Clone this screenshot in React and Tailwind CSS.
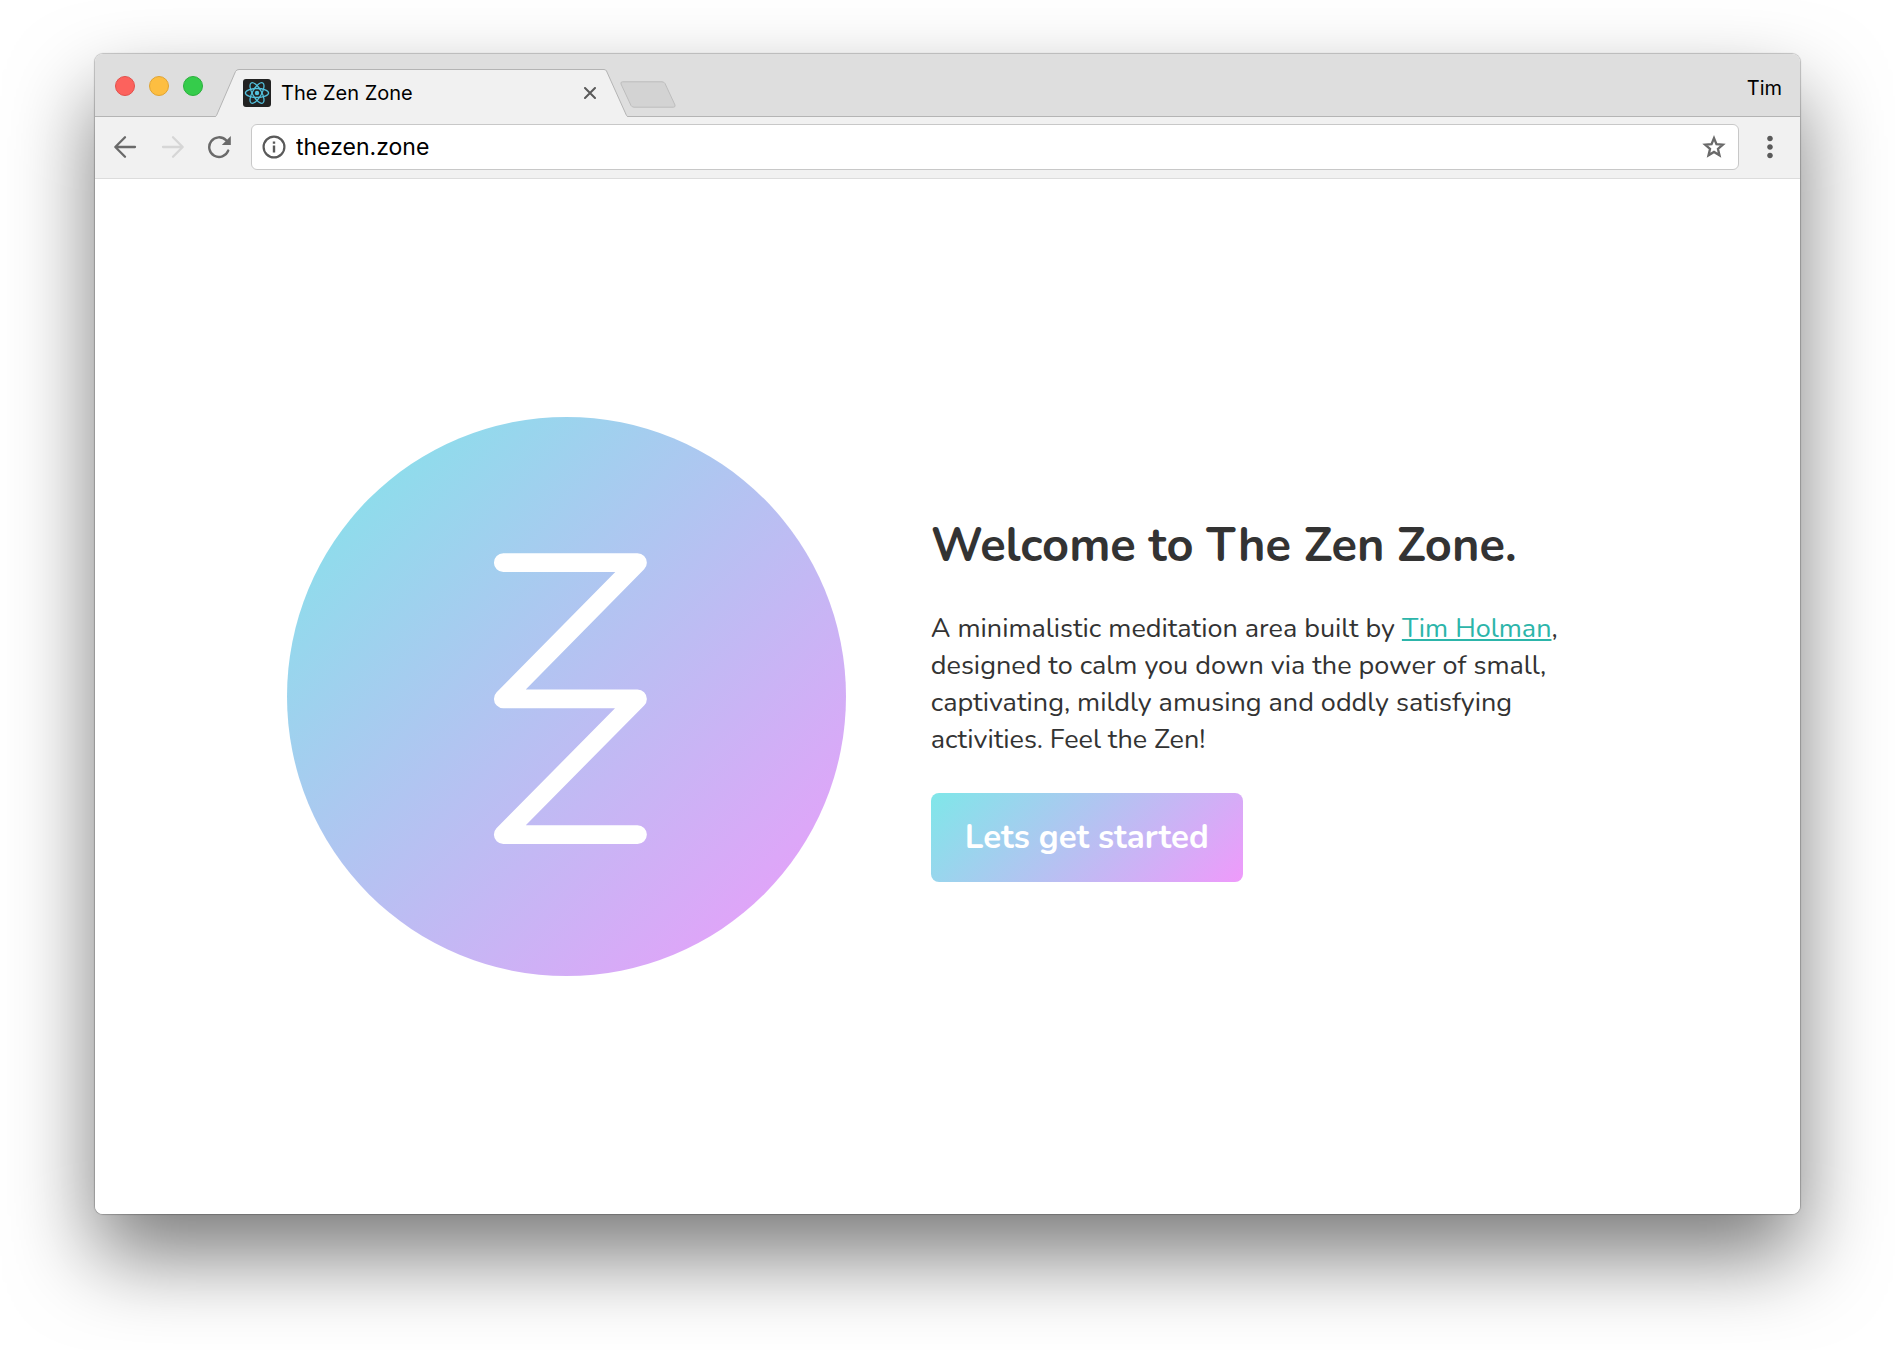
import React from 'react';
import { MdMoreVert } from 'react-icons/md';

const trafficLights = [
  { label: 'Close', className: 'bg-[#fc625d] border-[#e2504b]' },
  { label: 'Minimize', className: 'bg-[#fdbe41] border-[#e0a433]' },
  { label: 'Zoom', className: 'bg-[#35cc4b] border-[#2bb03d]' }
];

const ReactLogo = () => (
  <svg className="h-7 w-7 shrink-0" viewBox="0 0 28 28" fill="none" aria-hidden="true">
    <rect width="28" height="28" rx="3" fill="#222" />
    <g stroke="#53c1de" strokeWidth="1.3">
      <ellipse cx="14" cy="14" rx="11.6" ry="4.5" />
      <ellipse cx="14" cy="14" rx="11.6" ry="4.5" transform="rotate(60 14 14)" />
      <ellipse cx="14" cy="14" rx="11.6" ry="4.5" transform="rotate(120 14 14)" />
    </g>
    <circle cx="14" cy="14" r="2.2" fill="#53c1de" />
  </svg>
);

const ArrowIcon = ({ className }) => (
  <svg className={className} width="24" height="24" viewBox="0 0 24 24" fill="none" stroke="currentColor" strokeWidth="2.3" strokeLinecap="round" strokeLinejoin="round" aria-hidden="true">
    <path d="M22 12H2.5M12 2.3L2.3 12l9.7 9.7" />
  </svg>
);

const ReloadIcon = () => (
  <svg width="24" height="24" viewBox="0 0 24 24" aria-hidden="true">
    <path d="M21.2 15.6A9.8 9.8 0 1 1 19 5.2" fill="none" stroke="currentColor" strokeWidth="2.4" strokeLinecap="round" />
    <path d="M23.8 1v9h-9z" fill="currentColor" />
  </svg>
);

const InfoIcon = () => (
  <svg className="shrink-0 text-[#5a5a5a]" width="24" height="24" viewBox="0 0 24 24" fill="none" stroke="currentColor" aria-hidden="true">
    <circle cx="12" cy="12" r="10.4" strokeWidth="2.2" />
    <path d="M12 10.6V17.4M12 6.4V8.8" strokeWidth="2.4" />
  </svg>
);

const StarIcon = () => (
  <svg width="28" height="28" viewBox="0 0 24 24" fill="none" stroke="currentColor" strokeWidth="2" aria-hidden="true">
    <path d="M12 4.4L14.1 9.6L19.6 10L15.4 13.7L16.7 19.1L12 16.2L7.3 19.1L8.6 13.7L4.4 10L9.9 9.6Z" />
  </svg>
);

const CloseIcon = () => (
  <svg width="12" height="12" viewBox="0 0 12 12" stroke="#5a5a5a" strokeWidth="2" strokeLinecap="round" aria-hidden="true">
    <path d="M1 1l10 10M11 1L1 11" />
  </svg>
);

const Tab = ({ title }) => (
  <div className="flex h-12 items-stretch">
    {/* Slanted left edge */}
    <svg className="shrink-0" width="24" height="48" viewBox="0 0 24 48" aria-hidden="true">
      <path d="M0 48L1.5 46.5L20.5 2.5Q21.5 .5 24 .5V48Z" fill="#f1f1f1" />
      <path d="M0 47.5Q1 47.5 1.5 46.5L20.5 2.5Q21.5 .5 24 .5" fill="none" stroke="#b4b4b4" />
    </svg>
    <div className="flex w-[365px] items-center border-t border-[#b4b4b4] bg-[#f1f1f1] pb-0.5 pl-1 pr-2">
      <ReactLogo />
      <span className="ml-2.5 flex-1 text-xl leading-6">{title}</span>
      <button type="button" aria-label="Close tab">
        <CloseIcon />
      </button>
    </div>
    {/* Slanted right edge */}
    <svg className="shrink-0" width="24" height="48" viewBox="0 0 24 48" aria-hidden="true">
      <path d="M24 48L22.5 46.5L2.5 2Q1.8 .5 0 .5V48Z" fill="#f1f1f1" />
      <path d="M24 47.5Q23 47.5 22.5 46.5L2.5 2Q1.8 .5 0 .5" fill="none" stroke="#b4b4b4" />
    </svg>
  </div>
);

const TabStrip = () => (
  <div className="flex h-[63px] items-end bg-[#dedede] bg-[linear-gradient(to_top,#b4b4b4_1px,transparent_1px)] pl-5">
    <div className="flex h-full items-center gap-3.5">
      {trafficLights.map((light) => (
        <button
          key={light.label}
          type="button"
          aria-label={light.label}
          className={`h-5 w-5 rounded-full border ${light.className}`}
        />
      ))}
    </div>
    <div className="ml-3">
      <Tab title="The Zen Zone" />
    </div>
    <button type="button" aria-label="New tab" className="mb-2 -ml-2">
      <svg width="56" height="28" viewBox="0 0 56 28" aria-hidden="true">
        <path d="M2.5 .8H42Q44 .8 45 2.5L55 24Q55.5 26.2 53.5 26.2H14Q12 26.2 11 24.5L1 3Q.3 .8 2.5 .8Z" fill="#d3d3d3" stroke="#bdbdbd" />
      </svg>
    </button>
    <button type="button" className="mb-[17px] ml-auto mr-[18px] text-xl leading-6">Tim</button>
  </div>
);

const Toolbar = () => (
  <div className="flex h-[62px] items-center border-b border-[#dcdcdc] bg-[#f1f1f1] pb-0.5 pl-[18px] pr-[13px] text-[#6a6a6a]">
    <button type="button" aria-label="Back">
      <ArrowIcon />
    </button>
    <button type="button" aria-label="Forward" className="ml-6 text-[#d6d6d6]" disabled>
      <ArrowIcon className="rotate-180" />
    </button>
    <button type="button" aria-label="Reload" className="ml-[22px]">
      <ReloadIcon />
    </button>
    <div className="ml-5 flex h-[46px] flex-1 items-center rounded-md border border-[#c8c8c8] bg-white px-2.5">
      <InfoIcon />
      <input
        type="text"
        aria-label="Address"
        defaultValue="thezen.zone"
        className="ml-2.5 min-w-0 flex-1 bg-transparent text-[23px] leading-8 text-black outline-none"
      />
      <button type="button" aria-label="Bookmark this page">
        <StarIcon />
      </button>
    </div>
    <button type="button" aria-label="Menu" className="ml-3.5 text-[#5a5a5a]">
      <MdMoreVert size={34} />
    </button>
  </div>
);

const ZenLogo = () => (
  <div className="aspect-square w-[42.3%] shrink-0 rounded-full bg-[linear-gradient(135deg,#7fe7e9,#ef9afb)]">
    <svg className="h-full w-full" viewBox="0 0 558 558" fill="none" role="img" aria-label="Zen Zone logo">
      <path
        d="M216 145.5H350L216 281.5H350L216 417H350"
        stroke="#fff"
        strokeWidth="18.7"
        strokeLinecap="round"
        strokeLinejoin="round"
      />
    </svg>
  </div>
);

const Welcome = () => (
  <main className="flex flex-1 items-center justify-center bg-white px-48 font-[Nunito,Lato,sans-serif] text-[#333]">
    <ZenLogo />
    <div className="ml-[85px] flex-1 pt-2.5">
      <h1 className="text-[47px] leading-12 font-bold">Welcome to The Zen Zone.</h1>
      <p className="mt-10 max-w-[640px] text-[27px] leading-[37px]">
        A minimalistic meditation area built by{' '}
        <a href="#tim-holman" className="text-[#2cb5aa] underline">Tim Holman</a>, designed to calm you
        down via the power of small, captivating, mildly amusing and oddly satisfying activities. Feel the Zen!
      </p>
      <button
        type="button"
        className="mt-[35px] rounded-lg bg-[linear-gradient(135deg,#7fe7e9,#ef9afb)] px-[34px] py-6 text-[33px] leading-[41px] font-bold text-white"
      >
        Lets get started
      </button>
    </div>
  </main>
);

const App = () => {
  return (
    <div className="flex min-h-screen bg-white px-[95px] pt-[54px] pb-[136px] font-[Inter,sans-serif] text-black">
      <div className="flex flex-1 flex-col overflow-hidden rounded-lg shadow-[0_0_1px_1px_rgba(0,0,0,0.22),0_42px_84px_rgba(0,0,0,0.52)]">
        <TabStrip />
        <Toolbar />
        <Welcome />
      </div>
    </div>
  );
};

export default App;
